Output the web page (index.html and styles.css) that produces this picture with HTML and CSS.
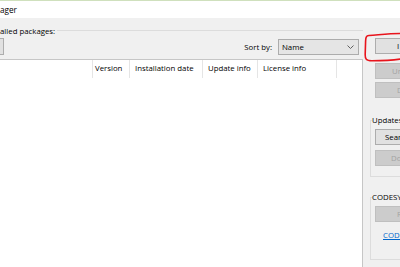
FILE: index.html
```html
<!DOCTYPE html>
<html>
<head>
<meta charset="utf-8">
<link rel="stylesheet" href="styles.css">
</head>
<body>
<div class="window">
  <div class="titlebar">ager</div>
  <div class="content">
    <section class="left">
      <div class="legend-row"><span class="legend">alled packages:</span><span class="rule"></span></div>
      <div class="toolbar">
        <button class="btn stub"></button>
        <span class="spacer"></span>
        <span class="sort-label">Sort by:</span>
        <div class="combo"><span>Name</span>
          <svg class="chev" width="7" height="4" viewBox="0 0 7 4"><path d="M0.5 0.5 L3.5 3.5 L6.5 0.5" fill="none" stroke="#606060" stroke-width="1"/></svg>
        </div>
      </div>
      <div class="list">
        <div class="header">
          <div class="col c-name"></div>
          <div class="col c-ver">Version</div>
          <div class="col c-date">Installation date</div>
          <div class="col c-upd">Update info</div>
          <div class="col c-lic">License info</div>
          <div class="col c-rest"></div>
        </div>
      </div>
    </section>
    <aside class="right">
      <button class="btn wide b-install">I</button>
      <button class="btn wide disabled b-un">Un</button>
      <button class="btn wide disabled b-det">D</button>
      <fieldset class="group g-updates">
        <legend>Updates</legend>
        <button class="btn wide b-search">Search</button>
        <button class="btn wide disabled b-dl">Do</button>
      </fieldset>
      <fieldset class="group g-store">
        <legend>CODESYS</legend>
        <button class="btn wide disabled b-r">R</button>
        <a class="link" href="#">CODESYS</a>
      </fieldset>
    </aside>
  </div>
  <svg class="annotation" width="40" height="32" viewBox="0 0 40 32">
    <path d="M40 1.5 C30 1, 18 2.5, 5 3.5 C2 3.8, 1.8 5.5, 1.6 9 L1.2 22 C1 27, 2 28.8, 8 28.8 C20 28.8, 32 28, 40 26.5" fill="none" stroke="#e8141c" stroke-width="1.6" stroke-linecap="round"/>
  </svg>
</div>
</body>
</html>
```

FILE: styles.css
```css
* { box-sizing: border-box; }
html, body { margin: 0; padding: 0; }
body {
  width: 400px;
  height: 267px;
  overflow: hidden;
  background: #f0f0f0;
  font-family: "Open Sans", "Noto Sans", sans-serif;
  font-size: 7.8px;
  color: #000000;
}
.window {
  position: relative;
  width: 400px;
  height: 267px;
  overflow: hidden;
}
.titlebar {
  height: 18px;
  background: #ffffff;
  border-top: 1px solid #cfe0bd;
  line-height: 17px;
  font-size: 8.2px;
}
.content {
  display: flex;
  height: 249px;
}
.left {
  width: 363px;
  flex: none;
  display: flex;
  flex-direction: column;
}
.legend-row {
  margin-top: 6px;
  height: 13px;
  display: flex;
  align-items: center;
}
.legend { white-space: nowrap; padding-right: 2px; }
.rule { flex: 1; height: 1px; background: #dcdcdc; }
.toolbar {
  margin-top: 1px;
  height: 17px;
  display: flex;
  align-items: center;
  padding-right: 4px;
}
.btn {
  font: inherit;
  color: #000000;
  background: #e1e1e1;
  border: 1px solid #adadad;
  padding: 0;
  margin: 0;
  height: 16px;
  text-align: left;
  white-space: nowrap;
  overflow: hidden;
}
.stub { width: 4px; height: 17px; border-left: none; }
.spacer { flex: 1; }
.sort-label { margin-right: 6px; }
.combo {
  width: 81px;
  height: 16px;
  background: #e5e5e5;
  border: 1px solid #acacac;
  display: flex;
  align-items: center;
  padding-left: 3px;
  padding-right: 4px;
  justify-content: space-between;
}
.list {
  margin-top: 4px;
  flex: 1;
  background: #ffffff;
  border-top: 1px solid #c6c6c6;
  border-right: 1px solid #c6c6c6;
}
.header {
  display: flex;
  height: 18px;
}
.col {
  height: 18px;
  line-height: 17px;
  border-right: 1px solid #e5e5e5;
  padding-left: 5px;
  white-space: nowrap;
  overflow: hidden;
}
.c-name { width: 93px; }
.c-ver { width: 37px; padding-left: 2px; }
.c-date { width: 73px; }
.c-upd { width: 55px; }
.c-lic { width: 79px; }
.c-rest { flex: 1; border-right: none; }

.right {
  flex: 1;
  display: flex;
  flex-direction: column;
  padding-left: 7px;
}
.wide { width: 70px; flex: none; }
.right > .btn { margin-left: 5px; }
.b-install { margin-top: 20px; padding-left: 21px; }
.b-un { margin-top: 9px; padding-left: 16px; }
.b-det { margin-top: 3px; padding-left: 21px; }
.disabled {
  background: #cccccc;
  border-color: #bfbfbf;
  color: #a3a3a3;
}
.group {
  margin: 0;
  border: 1px solid #dcdcdc;
  border-right: none;
  padding: 0 0 0 4px;
  width: 60px;
  display: flex;
  flex-direction: column;
}
.group legend {
  padding: 0;
  margin-left: -3px;
  line-height: 10px;
  white-space: nowrap;
}
.g-updates { margin-top: 17px; height: 62px; }
.b-search { margin-top: 4px; padding-left: 9px; }
.b-dl { margin-top: 5px; padding-left: 15px; }
.g-store { margin-top: 15px; height: 68px; }
.b-r { margin-top: 4px; padding-left: 21px; }
.link {
  margin-top: 8px;
  margin-left: 8px;
  color: #0066cc;
  text-decoration: underline;
  white-space: nowrap;
}
.annotation {
  position: absolute;
  left: 364px;
  top: 32px;
}
```
